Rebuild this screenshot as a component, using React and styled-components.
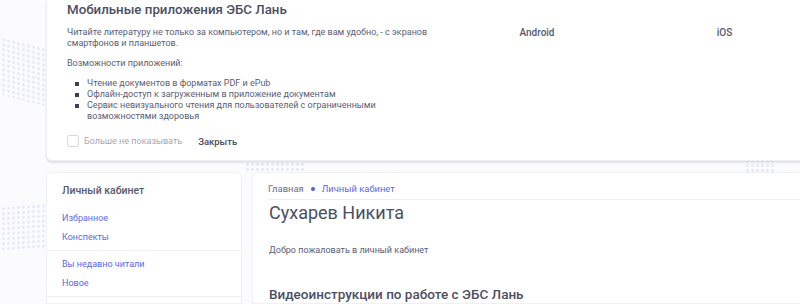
import styled, { createGlobalStyle } from "styled-components";

const Global = createGlobalStyle`
  html, body { margin: 0; padding: 0; background: #fbfbfd; }
  body { font-family: Roboto, "Noto Sans", sans-serif; }
  * { box-sizing: border-box; }
`;

const Page = styled.div`
  position: relative;
  width: 800px;
  height: 304px;
  overflow: hidden;
  padding-left: 46px;
  display: flex;
  flex-direction: column;
  gap: 11px;
`;

const Dots = styled.div`
  position: absolute;
  left: ${(p) => p.left}px;
  top: ${(p) => p.top}px;
  width: ${(p) => p.w}px;
  height: ${(p) => p.h}px;
  background-image: radial-gradient(circle, #e3e7fb 1.2px, transparent 1.6px);
  background-size: 5px 5px;
  transform: skewY(${(p) => p.skew}deg);
  z-index: 0;
`;

const TopCard = styled.section`
  position: relative;
  z-index: 1;
  margin-right: -30px;
  background: #fff;
  border: 1px solid #eeeff3;
  border-top: none;
  border-radius: 0 0 6px 6px;
  box-shadow: 0 2px 2px rgba(40, 44, 70, 0.12);
  padding: 0 0 12px 20px;
  height: 161px;
`;

const Title = styled.h2`
  margin: 0;
  padding-top: 1px;
  font-size: 13.3px;
  line-height: 17px;
  font-weight: 500;
  color: #4b4f63;
`;

const Columns = styled.div`
  display: grid;
  grid-template-columns: 372px 196px 179px;
  margin-top: 9px;
`;

const Text = styled.p`
  margin: 0 0 9px;
  font-size: 9px;
  line-height: 11px;
  color: #5c6074;
`;

const List = styled.ul`
  margin: 9px 0 0;
  padding: 0 0 0 20px;
  list-style: none;
  font-size: 9px;
  line-height: 11px;
  color: #5c6074;
  li { position: relative; }
  li::before {
    content: "";
    position: absolute;
    left: -12px;
    top: 4px;
    width: 4px;
    height: 4px;
    background: #3d4052;
  }
`;

const Store = styled.div`
  text-align: center;
  font-size: 10px;
  line-height: 11px;
  font-weight: 500;
  color: #555a6e;
`;

const Footer = styled.div`
  display: flex;
  align-items: center;
  gap: 16px;
  margin-top: 13px;
`;

const Check = styled.label`
  display: flex;
  align-items: center;
  gap: 5px;
  font-size: 9px;
  color: #a4a7b8;
  span.box {
    width: 12px;
    height: 12px;
    border: 1px solid #d7d9e2;
    border-radius: 2px;
    background: #fff;
  }
`;

const Close = styled.button`
  border: none;
  background: none;
  padding: 0;
  font-family: inherit;
  font-size: 9.5px;
  font-weight: 500;
  color: #4a4d5e;
`;

const Bottom = styled.div`
  position: relative;
  z-index: 1;
  display: flex;
  gap: 10px;
  margin-right: -30px;
  flex: 1;
`;

const Side = styled.aside`
  width: 196px;
  background: #fff;
  border: 1px solid #f0f1f4;
  border-radius: 6px 6px 0 0;
  padding-top: 11px;
`;

const SideTitle = styled.div`
  padding: 0 15px;
  font-size: 10.5px;
  line-height: 14px;
  font-weight: 500;
  color: #555a6e;
  margin-bottom: 7px;
`;

const Group = styled.div`
  border-bottom: 1px solid #eceef2;
  padding: 4px 15px 3px;
`;

const SideLink = styled.a`
  display: flex;
  align-items: center;
  height: 19px;
  font-size: 9px;
  line-height: 11px;
  color: #5a6be0;
  text-decoration: none;
`;

const Main = styled.main`
  flex: 1;
  background: #fff;
  border: 1px solid #f0f1f4;
  border-radius: 6px 0 0 0;
  padding: 10px 0 0 15px;
`;

const Crumbs = styled.div`
  display: flex;
  align-items: center;
  gap: 7px;
  font-size: 9.4px;
  line-height: 12px;
  color: #6b6f80;
  padding-bottom: 4px;
  border-bottom: 1px solid #eceef2;
  a { color: #5a6be0; text-decoration: none; }
  i {
    width: 4px;
    height: 4px;
    border-radius: 50%;
    background: #4a63e6;
  }
`;

const Name = styled.h1`
  margin: 2px 0 0 1px;
  font-size: 18px;
  line-height: 22px;
  font-weight: 400;
  color: #4b4f63;
`;

const Welcome = styled.p`
  margin: 20px 0 0 1px;
  font-size: 9px;
  line-height: 12px;
  color: #5c6074;
`;

const SubTitle = styled.h3`
  margin: 30px 0 0 1px;
  font-size: 13.5px;
  line-height: 16px;
  font-weight: 500;
  color: #4b4f63;
`;

export default function App() {
  return (
    <>
      <Global />
      <Page>
        <Dots left={-4} top={42} w={52} h={58} skew={14} />
        <Dots left={-4} top={205} w={52} h={46} skew={-4} />
        <Dots left={245} top={162} w={60} h={10} skew={0} />
        <Dots left={745} top={158} w={30} h={14} skew={0} />
        <TopCard>
          <Title>Мобильные приложения ЭБС Лань</Title>
          <Columns>
            <div>
              <Text>
                Читайте литературу не только за компьютером, но и там, где вам удобно, - с экранов
                смартфонов и планшетов.
              </Text>
              <Text>Возможности приложений:</Text>
              <List>
                <li>Чтение документов в форматах PDF и ePub</li>
                <li>Офлайн-доступ к загруженным в приложение документам</li>
                <li>Сервис невизуального чтения для пользователей с ограниченными возможностями здоровья</li>
              </List>
              <Footer>
                <Check>
                  <span className="box" />
                  Больше не показывать
                </Check>
                <Close>Закрыть</Close>
              </Footer>
            </div>
            <Store>Android</Store>
            <Store>iOS</Store>
          </Columns>
        </TopCard>
        <Bottom>
          <Side>
            <SideTitle>Личный кабинет</SideTitle>
            <Group>
              <SideLink href="#">Избранное</SideLink>
              <SideLink href="#">Конспекты</SideLink>
            </Group>
            <Group>
              <SideLink href="#">Вы недавно читали</SideLink>
              <SideLink href="#">Новое</SideLink>
            </Group>
          </Side>
          <Main>
            <Crumbs>
              <span>Главная</span>
              <i />
              <a href="#">Личный кабинет</a>
            </Crumbs>
            <Name>Сухарев Никита</Name>
            <Welcome>Добро пожаловать в личный кабинет</Welcome>
            <SubTitle>Видеоинструкции по работе с ЭБС Лань</SubTitle>
          </Main>
        </Bottom>
      </Page>
    </>
  );
}
